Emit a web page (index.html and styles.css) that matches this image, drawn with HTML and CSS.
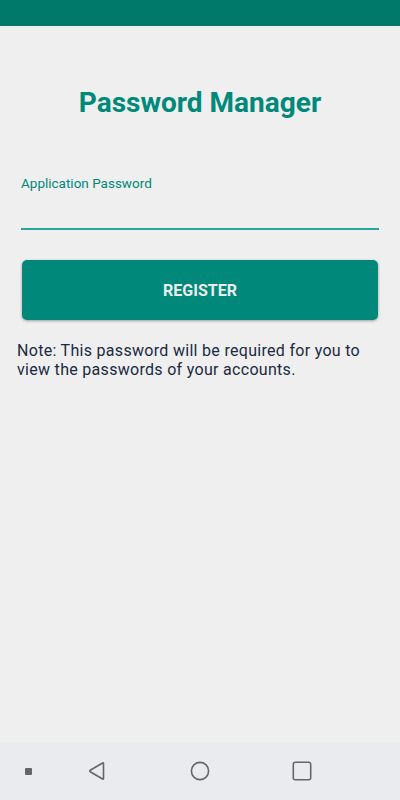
FILE: index.html
```html
<!DOCTYPE html>
<html lang="en">
<head>
    <meta charset="UTF-8">
    <meta name="viewport" content="width=device-width, initial-scale=1.0">
    <title>Password Manager</title>
    <link rel="stylesheet" href="styles.css">
</head>
<body>
    <div class="status-bar"></div>

    <div class="content">
        <h1 class="title">Password Manager</h1>

        <form class="register-form">
            <label class="field">
                <span class="field-label">Application Password</span>
                <input type="password" class="field-input">
            </label>

            <button type="submit" class="register-btn">REGISTER</button>
        </form>

        <p class="note">Note: This password will be required for you to view the passwords of your accounts.</p>
    </div>

    <div class="nav-bar">
        <span class="nav-dot"></span>
        <svg class="nav-icon nav-back" width="20" height="20" viewBox="0 0 20 20">
            <path d="M16.5 2.5 L16.5 17.5 Q16.5 18.5 15.6 18 L3.2 10.8 Q2.4 10 3.2 9.2 L15.6 2 Q16.5 1.5 16.5 2.5 Z" fill="none" stroke="#666" stroke-width="1.6" stroke-linejoin="round"/>
        </svg>
        <svg class="nav-icon nav-home" width="20" height="20" viewBox="0 0 20 20">
            <circle cx="10" cy="10" r="8.6" fill="none" stroke="#666" stroke-width="1.6"/>
        </svg>
        <svg class="nav-icon nav-recent" width="20" height="20" viewBox="0 0 20 20">
            <rect x="1.3" y="1.3" width="17.4" height="17.4" rx="2" fill="none" stroke="#666" stroke-width="1.6"/>
        </svg>
    </div>
</body>
</html>
```

FILE: styles.css
```css
* {
    box-sizing: border-box;
}

html, body {
    margin: 0;
    padding: 0;
    height: 100%;
}

body {
    font-family: Roboto, "Noto Sans", sans-serif;
    background-color: #efefef;
    display: flex;
    flex-direction: column;
    height: 800px;
    overflow: hidden;
}

.status-bar {
    height: 26px;
    background: #00796b;
    flex-shrink: 0;
}

.content {
    flex: 1;
    padding: 0 17px;
}

.title {
    margin: 57px 0 0;
    text-align: center;
    color: #00897b;
    font-size: 28px;
    font-weight: bold;
    line-height: 40px;
}

.register-form {
    margin-top: 52px;
}

.field {
    display: block;
    padding: 0 4px;
}

.field-label {
    display: block;
    color: #00897b;
    font-size: 13.5px;
    line-height: 16px;
}

.field-input {
    display: block;
    width: 100%;
    height: 39px;
    border: none;
    border-bottom: 2px solid #26a69a;
    background: transparent;
    outline: none;
    font-size: 16px;
}

.register-btn {
    display: block;
    width: calc(100% - 10px);
    margin: 30px 5px 0;
    height: 60px;
    border: none;
    border-radius: 5px;
    background: #00897b;
    color: #ececec;
    font-family: Roboto, sans-serif;
    font-size: 16px;
    font-weight: bold;
    box-shadow: 0 1px 3px rgba(0, 0, 0, 0.35);
    cursor: pointer;
}

.note {
    margin: 21px 0 0;
    max-width: 362px;
    color: #1b2a42;
    font-size: 16px;
    line-height: 19px;
    letter-spacing: 0.3px;
}

.nav-bar {
    height: 58px;
    flex-shrink: 0;
    background: #eaebef;
    display: flex;
    align-items: center;
    padding-left: 25px;
}

.nav-dot {
    width: 7px;
    height: 7px;
    background: #666;
    border-radius: 1px;
}

.nav-icon {
    display: block;
}

.nav-back {
    margin-left: 55px;
}

.nav-home {
    margin-left: 83px;
}

.nav-recent {
    margin-left: 82px;
}
```
